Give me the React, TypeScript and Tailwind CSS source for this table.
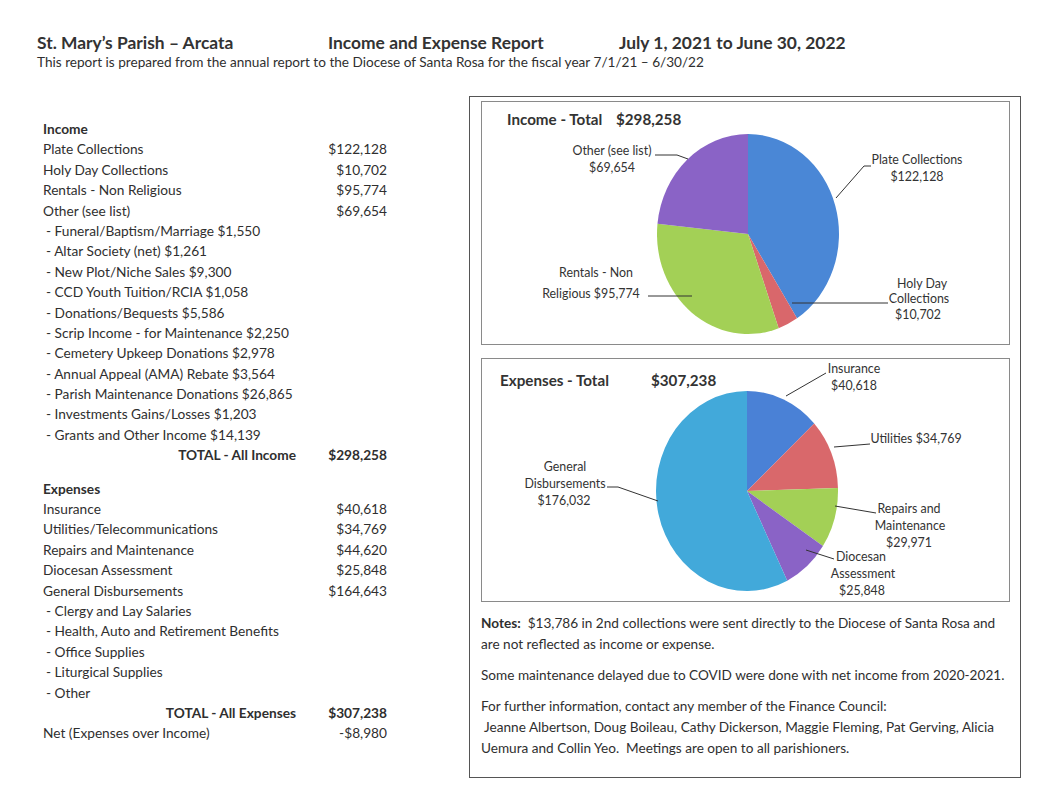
import React from "react";

type Row = { l: string; a?: string; kind?: "head" | "sub" | "total" | "plain" };

const incomeRows: Row[] = [
  { l: "Income", kind: "head" },
  { l: "Plate Collections", a: "$122,128" },
  { l: "Holy Day Collections", a: "$10,702" },
  { l: "Rentals - Non Religious", a: "$95,774" },
  { l: "Other (see list)", a: "$69,654" },
  { l: "- Funeral/Baptism/Marriage $1,550", kind: "sub" },
  { l: "- Altar Society (net) $1,261", kind: "sub" },
  { l: "- New Plot/Niche Sales $9,300", kind: "sub" },
  { l: "- CCD Youth Tuition/RCIA $1,058", kind: "sub" },
  { l: "- Donations/Bequests $5,586", kind: "sub" },
  { l: "- Scrip Income - for Maintenance $2,250", kind: "sub" },
  { l: "- Cemetery Upkeep Donations $2,978", kind: "sub" },
  { l: "- Annual Appeal (AMA) Rebate $3,564", kind: "sub" },
  { l: "- Parish Maintenance Donations $26,865", kind: "sub" },
  { l: "- Investments Gains/Losses $1,203", kind: "sub" },
  { l: "- Grants and Other Income $14,139", kind: "sub" },
  { l: "TOTAL - All Income", a: "$298,258", kind: "total" },
];

const expenseRows: Row[] = [
  { l: "Expenses", kind: "head" },
  { l: "Insurance", a: "$40,618" },
  { l: "Utilities/Telecommunications", a: "$34,769" },
  { l: "Repairs and Maintenance", a: "$44,620" },
  { l: "Diocesan Assessment", a: "$25,848" },
  { l: "General Disbursements", a: "$164,643" },
  { l: "- Clergy and Lay Salaries", kind: "sub" },
  { l: "- Health, Auto and Retirement Benefits", kind: "sub" },
  { l: "- Office Supplies", kind: "sub" },
  { l: "- Liturgical Supplies", kind: "sub" },
  { l: "- Other", kind: "sub" },
  { l: "TOTAL - All Expenses", a: "$307,238", kind: "total" },
  { l: "Net (Expenses over Income)", a: "-$8,980" },
];

function RowView({ r }: { r: Row }) {
  if (r.kind === "head") {
    return <div className="h-[20.4px] leading-[20.4px] font-bold">{r.l}</div>;
  }
  if (r.kind === "sub") {
    return <div className="h-[20.4px] leading-[20.4px] pl-[3px] whitespace-nowrap">{r.l}</div>;
  }
  if (r.kind === "total") {
    return (
      <div className="flex h-[20.4px] leading-[20.4px] font-bold">
        <span className="flex-1 text-right">{r.l}</span>
        <span className="w-[91px] text-right">{r.a}</span>
      </div>
    );
  }
  return (
    <div className="flex h-[20.4px] leading-[20.4px]">
      <span className="flex-1 whitespace-nowrap">{r.l}</span>
      <span className="w-[91px] text-right">{r.a}</span>
    </div>
  );
}

type Slice = { v: number; c: string };

function Pie({ cx, cy, rx, ry, slices }: { cx: number; cy: number; rx: number; ry: number; slices: Slice[] }) {
  const total = slices.reduce((s, x) => s + x.v, 0);
  let acc = 0;
  const pt = (t: number) => [cx + rx * Math.sin(t), cy - ry * Math.cos(t)];
  return (
    <g>
      {slices.map((s, i) => {
        const a0 = (acc / total) * Math.PI * 2;
        acc += s.v;
        const a1 = (acc / total) * Math.PI * 2;
        const [x0, y0] = pt(a0);
        const [x1, y1] = pt(a1);
        const large = a1 - a0 > Math.PI ? 1 : 0;
        return (
          <path
            key={i}
            d={`M${cx} ${cy} L${x0} ${y0} A${rx} ${ry} 0 ${large} 1 ${x1} ${y1} Z`}
            fill={s.c}
          />
        );
      })}
    </g>
  );
}

const LBL = { fontSize: 12.4, fill: "#333" } as const;

function IncomeChart() {
  return (
    <svg width="527" height="242" viewBox="482 102 527 242" className="block" style={{ fontFamily: "Lato, sans-serif" }}>
      <text x="507" y="125" fontSize="15.2" fontWeight="700" fill="#333">Income - Total</text>
      <text x="616" y="125" fontSize="15.2" fontWeight="700" fill="#333">$298,258</text>
      <Pie
        cx={748}
        cy={234}
        rx={91}
        ry={100}
        slices={[
          { v: 122128, c: "#4a87d6" },
          { v: 10702, c: "#d9676b" },
          { v: 95774, c: "#a3d056" },
          { v: 69654, c: "#8a63c6" },
        ]}
      />
      <g stroke="#333" strokeWidth="1" fill="none">
        <path d="M655 155 H677 L688 159" />
        <path d="M836 198 L864 166 H871" />
        <path d="M648 296 H692" />
        <path d="M792 303 H888" />
      </g>
      <g {...LBL} textAnchor="middle">
        <text x="612" y="155">Other (see list)</text>
        <text x="612" y="172">$69,654</text>
        <text x="917" y="164">Plate Collections</text>
        <text x="917" y="181">$122,128</text>
        <text x="596" y="277">Rentals - Non</text>
        <text x="591" y="298">Religious $95,774</text>
        <text x="922" y="288">Holy Day</text>
        <text x="919" y="303">Collections</text>
        <text x="918" y="319">$10,702</text>
      </g>
    </svg>
  );
}

function ExpenseChart() {
  return (
    <svg width="527" height="242" viewBox="482 359 527 242" className="block" style={{ fontFamily: "Lato, sans-serif" }}>
      <text x="500" y="386" fontSize="15.2" fontWeight="700" fill="#333">Expenses - Total</text>
      <text x="651" y="386" fontSize="15.2" fontWeight="700" fill="#333">$307,238</text>
      <Pie
        cx={747}
        cy={491}
        rx={91}
        ry={100}
        slices={[
          { v: 40618, c: "#4a81d6" },
          { v: 34769, c: "#d9686b" },
          { v: 29971, c: "#a3d056" },
          { v: 25848, c: "#8a63c6" },
          { v: 176032, c: "#42a9da" },
        ]}
      />
      <g stroke="#333" strokeWidth="1" fill="none">
        <path d="M826 373 L786 396" />
        <path d="M834 447 L870 444" />
        <path d="M607 487 H618 L658 501" />
        <path d="M835 506 L876 513" />
        <path d="M806 550 L834 559" />
      </g>
      <g {...LBL} textAnchor="middle">
        <text x="854" y="373">Insurance</text>
        <text x="854" y="390">$40,618</text>
        <text x="916" y="443">Utilities $34,769</text>
        <text x="565" y="471">General</text>
        <text x="565" y="488">Disbursements</text>
        <text x="564" y="505">$176,032</text>
        <text x="909" y="513">Repairs and</text>
        <text x="910" y="530">Maintenance</text>
        <text x="909" y="547">$29,971</text>
        <text x="861" y="561">Diocesan</text>
        <text x="863" y="578">Assessment</text>
        <text x="862" y="595">$25,848</text>
      </g>
    </svg>
  );
}

export default function App() {
  return (
    <div className="w-[1043px] h-[803px] bg-white text-[#2f2f2f] font-['Lato',sans-serif] overflow-hidden">
      <div className="pt-[33px] pl-[37px]">
        <div className="flex text-[17.4px] leading-[20px] font-bold text-[#333]">
          <span className="w-[291px]">St. Mary’s Parish – Arcata</span>
          <span className="w-[291px]">Income and Expense Report</span>
          <span>July 1, 2021 to June 30, 2022</span>
        </div>
        <div className="text-[13.6px] leading-[18px]">
          This report is prepared from the annual report to the Diocese of Santa Rosa for the fiscal year 7/1/21 – 6/30/22
        </div>
      </div>

      <div className="flex mt-[25px]">
        <div className="w-[469px] pl-[43px] pt-[23px] text-[13.7px]">
          <div className="w-[344px]">
            {incomeRows.map((r, i) => (
              <RowView key={i} r={r} />
            ))}
            <div className="h-[13px]" />
            {expenseRows.map((r, i) => (
              <RowView key={i} r={r} />
            ))}
          </div>
        </div>

        <div className="w-[552px] h-[682px] border border-[#555] pt-[4px] pl-[11px]">
          <div className="w-[529px] h-[244px] border border-[#8a8a8a]">
            <IncomeChart />
          </div>
          <div className="w-[529px] h-[244px] border border-[#8a8a8a] mt-[13px]">
            <ExpenseChart />
          </div>
          <div className="mt-[11px] text-[13.6px] leading-[21px] whitespace-nowrap">
            <div>
              <span className="font-bold">Notes:</span>&nbsp; $13,786 in 2nd collections were sent directly to the Diocese of Santa Rosa and
            </div>
            <div>are not reflected as income or expense.</div>
            <div className="mt-[10px]">Some maintenance delayed due to COVID were done with net income from 2020-2021.</div>
            <div className="mt-[10px]">For further information, contact any member of the Finance Council:</div>
            <div>&nbsp;Jeanne Albertson, Doug Boileau, Cathy Dickerson, Maggie Fleming, Pat Gerving, Alicia</div>
            <div>Uemura and Collin Yeo.&nbsp; Meetings are open to all parishioners.</div>
          </div>
        </div>
      </div>
    </div>
  );
}
